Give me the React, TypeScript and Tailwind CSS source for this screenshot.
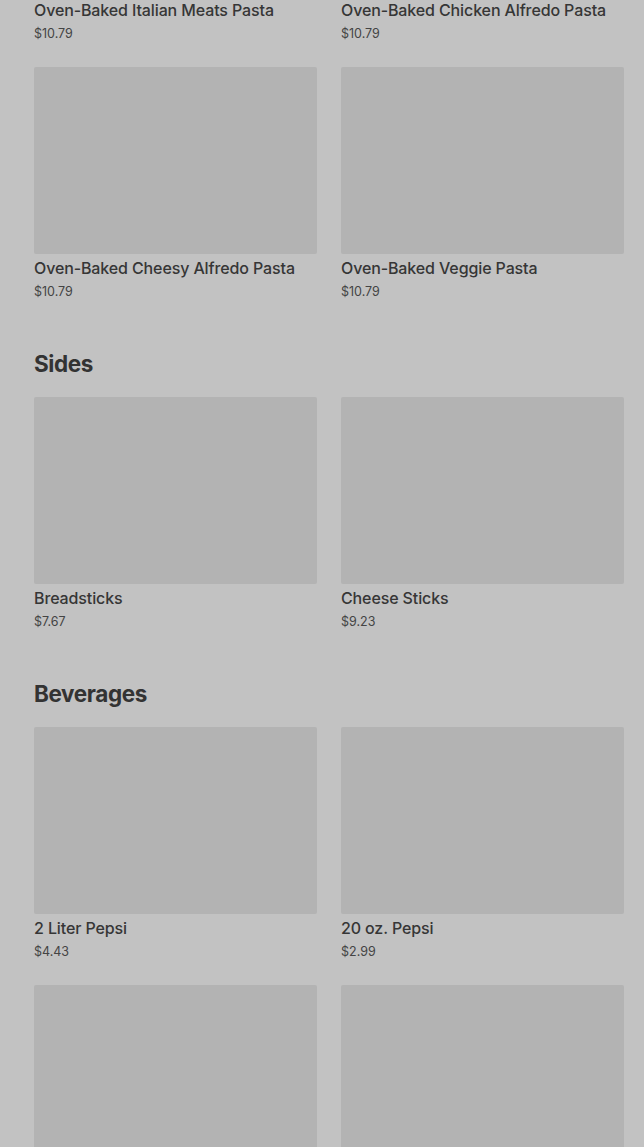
import React from "react";

type Item = { name?: string; price?: string };

const sections: { title?: string; items: Item[] }[] = [
  {
    items: [
      { name: "Oven-Baked Italian Meats Pasta", price: "$10.79" },
      { name: "Oven-Baked Chicken Alfredo Pasta", price: "$10.79" },
      { name: "Oven-Baked Cheesy Alfredo Pasta", price: "$10.79" },
      { name: "Oven-Baked Veggie Pasta", price: "$10.79" },
    ],
  },
  {
    title: "Sides",
    items: [
      { name: "Breadsticks", price: "$7.67" },
      { name: "Cheese Sticks", price: "$9.23" },
    ],
  },
  {
    title: "Beverages",
    items: [
      { name: "2 Liter Pepsi", price: "$4.43" },
      { name: "20 oz. Pepsi", price: "$2.99" },
      {},
      {},
    ],
  },
];

function Card({ item }: { item: Item }) {
  return (
    <div className="flex flex-col">
      <div className="h-[187px] w-full rounded-[2px] bg-[#b3b3b3]" />
      {item.name && (
        <>
          <div className="mt-1 text-[16px] leading-[20px] font-medium text-[#363636] tracking-[-0.12px]">
            {item.name}
          </div>
          <div className="mt-[5px] text-[12.5px] leading-[18px] text-[#444444]">{item.price}</div>
        </>
      )}
    </div>
  );
}

export default function App() {
  return (
    <div
      className="h-[1147px] w-[644px] overflow-hidden bg-[#c2c2c2]"
      style={{ fontFamily: "Inter, 'Noto Sans', sans-serif" }}
    >
      <div className="-mt-[191px] pl-[34px] pr-[20px]">
        {sections.map((s, i) => (
          <div key={i} className={s.title ? "mt-[49px]" : ""}>
            {s.title && (
              <h2 className="mb-[19px] text-[22.5px] leading-[28px] font-bold text-[#333333] tracking-[-0.4px]">
                {s.title}
              </h2>
            )}
            <div className="grid grid-cols-2 gap-x-[24px] gap-y-[24px]">
              {s.items.map((it, j) => (
                <Card key={j} item={it} />
              ))}
            </div>
          </div>
        ))}
      </div>
    </div>
  );
}
